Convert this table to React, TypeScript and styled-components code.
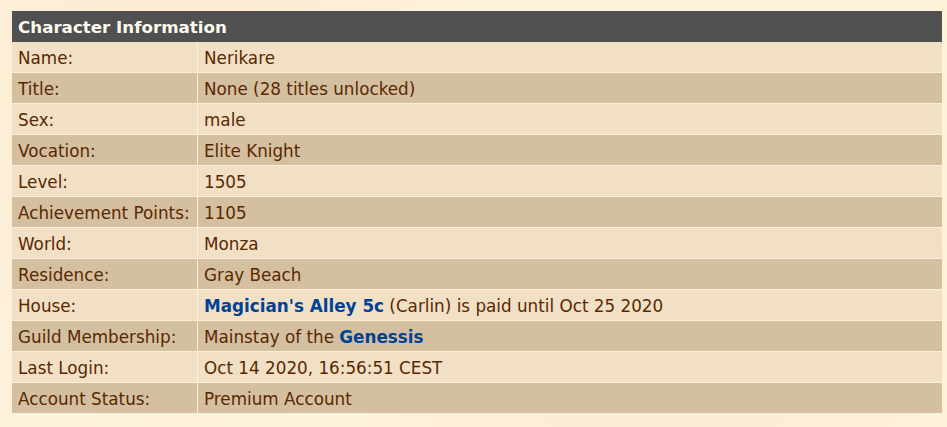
import React from "react";
import styled, { createGlobalStyle } from "styled-components";

const GlobalStyle = createGlobalStyle`
  html, body {
    margin: 0;
    padding: 0;
    background: #fff2db;
  }
  body {
    font-family: "DejaVu Sans", Verdana, sans-serif;
  }
`;

const Page = styled.div`
  width: 947px;
  height: 427px;
  box-sizing: border-box;
  padding: 11px 5px 0 12px;
  background:
    radial-gradient(circle at 20% 30%, rgba(230, 205, 170, 0.25), transparent 40%),
    radial-gradient(circle at 70% 80%, rgba(230, 205, 170, 0.2), transparent 45%),
    #fff2db;
`;

const Table = styled.div`
  display: grid;
  grid-template-columns: 185px 1fr;
  column-gap: 1px;
  row-gap: 1px;
  width: 930px;
  background: #faf0d7;
`;

const Header = styled.div`
  grid-column: 1 / -1;
  height: 31px;
  display: flex;
  align-items: center;
  padding: 0 6px;
  background: #505050;
  color: #fffaef;
  font-weight: bold;
  font-size: 16.7px;
  margin-bottom: -1px;
`;

const Cell = styled.div<{ $dark: boolean }>`
  height: 30px;
  display: flex;
  align-items: center;
  padding: 1px 6px 0;
  box-sizing: border-box;
  background: ${(p) => (p.$dark ? "#d4c0a1" : "#f1e0c6")};
  color: #5a2800;
  font-size: 16.8px;
  white-space: pre;
`;

const Link = styled.span`
  color: #004294;
  font-weight: bold;
`;

const rows: [string, React.ReactNode][] = [
  ["Name:", "Nerikare"],
  ["Title:", "None (28 titles unlocked)"],
  ["Sex:", "male"],
  ["Vocation:", "Elite Knight"],
  ["Level:", "1505"],
  ["Achievement Points:", "1105"],
  ["World:", "Monza"],
  ["Residence:", "Gray Beach"],
  [
    "House:",
    <>
      <Link>Magician's Alley 5c</Link> (Carlin) is paid until Oct 25 2020
    </>,
  ],
  [
    "Guild Membership:",
    <>
      Mainstay of the <Link>Genessis</Link>
    </>,
  ],
  ["Last Login:", "Oct 14 2020, 16:56:51 CEST"],
  ["Account Status:", "Premium Account"],
];

export default function App() {
  return (
    <>
      <GlobalStyle />
      <Page>
        <Table>
          <Header>Character Information</Header>
          {rows.map(([label, value], i) => (
            <React.Fragment key={label}>
              <Cell $dark={i % 2 === 1}>{label}</Cell>
              <Cell $dark={i % 2 === 1}>{value}</Cell>
            </React.Fragment>
          ))}
        </Table>
      </Page>
    </>
  );
}
